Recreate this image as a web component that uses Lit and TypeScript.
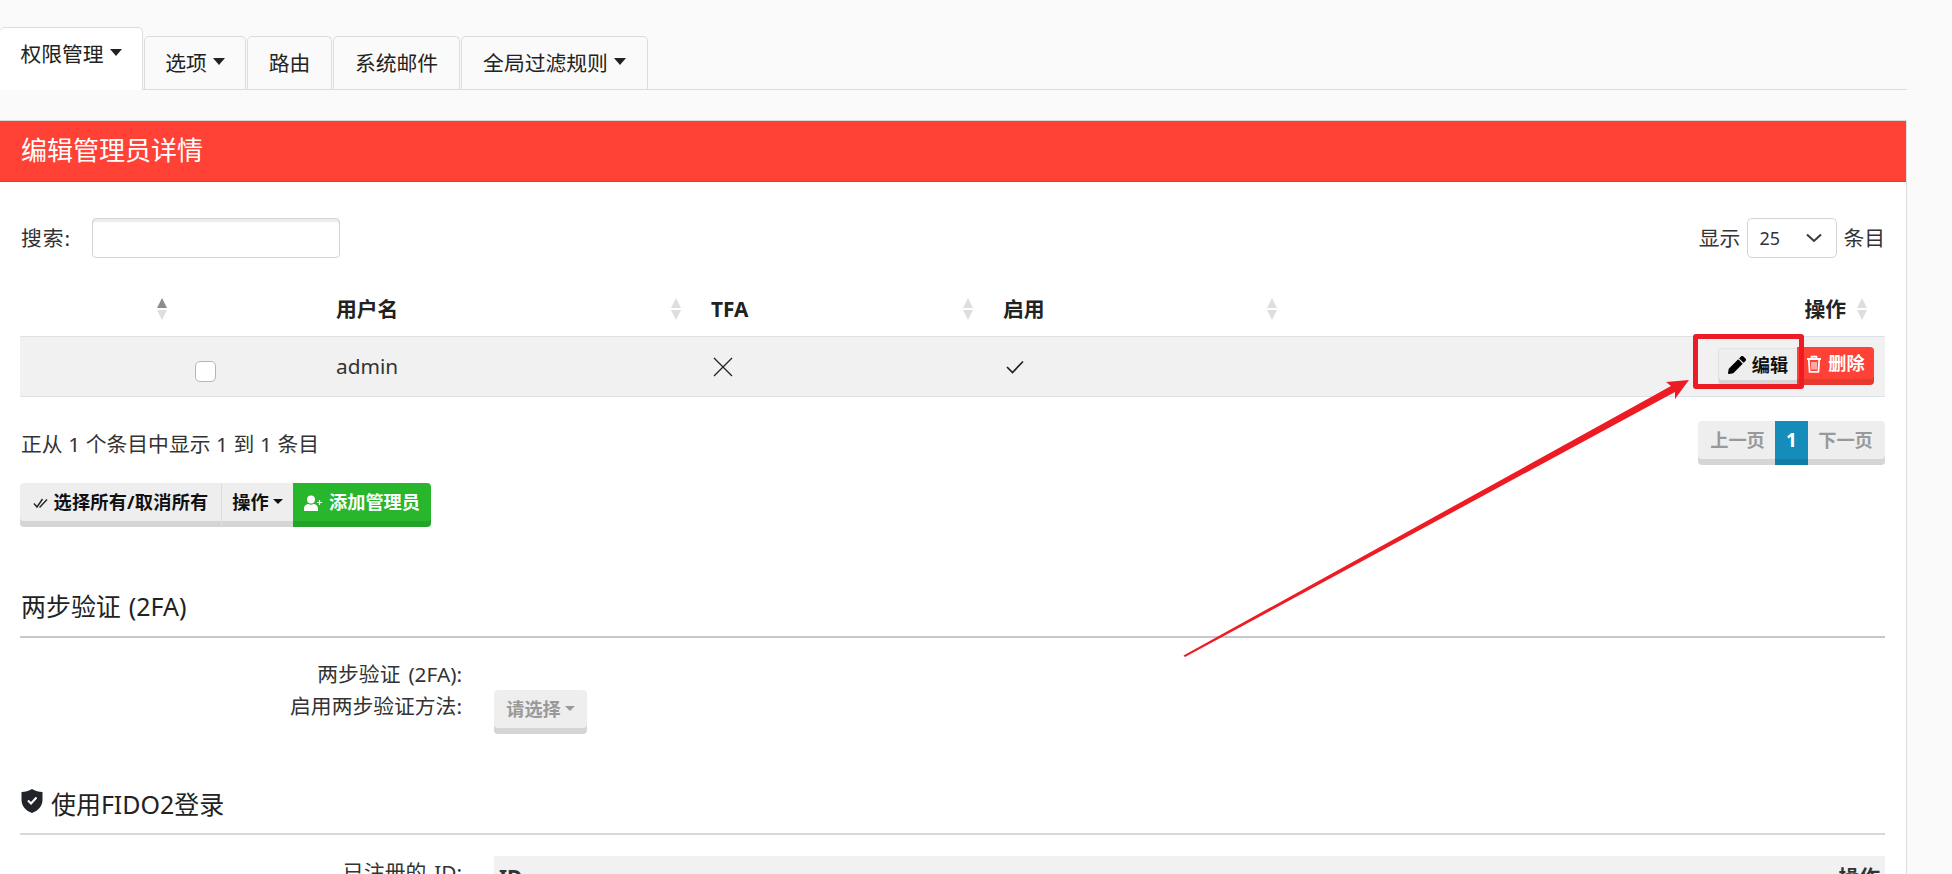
import { LitElement, html, css, svg } from "lit";
import { customElement } from "lit/decorators.js";

const sort = (active = false) => html`<svg class="sort" width="14" height="24" viewBox="0 0 14 24">
  <path d="M7 1 L12 11 H2 Z" fill=${active ? "#8c8c8c" : "#dedede"}></path>
  <path d="M7 23 L12 13 H2 Z" fill="#dedede"></path>
</svg>`;

const caret = html`<span class="caret"></span>`;

const pencil = html`<svg class="ic" width="18" height="18" viewBox="0 0 512 512" fill="#000"><path d="M497.9 142.1l-46.1 46.1c-4.7 4.7-12.3 4.7-17 0l-111-111c-4.7-4.7-4.7-12.3 0-17l46.1-46.1c18.7-18.7 49.1-18.7 67.9 0l60.1 60.1c18.8 18.7 18.8 49.1 0 67.9zM284.2 99.8L21.6 362.4.4 483.9c-2.9 16.4 11.4 30.6 27.8 27.8l121.5-21.3 262.6-262.6c4.7-4.7 4.7-12.3 0-17l-111-111c-4.8-4.7-12.4-4.7-17.1 0z"></path></svg>`;

const trash = html`<svg class="ic" width="16" height="18" viewBox="0 0 16 18" fill="none" stroke="#fff"><path d="M1 4 H15" stroke-width="2"></path><path d="M5.5 3.5 V1.6 H10.5 V3.5" stroke-width="1.6"></path><path d="M2.8 4.5 L3.6 16.8 H12.4 L13.2 4.5" stroke-width="1.8"></path><path d="M6 7 V14.5 M8 7 V14.5 M10 7 V14.5" stroke-width="1.1"></path></svg>`;

const userPlus = html`<svg class="ic" width="19" height="16" viewBox="0 0 19 16" fill="#fff"><circle cx="7" cy="4.4" r="4"></circle><path d="M0 16 V13.5 C0 10.5 2.5 9 4.5 9 C6 10 8 10 9.5 9 C11.5 9 14 10.5 14 13.5 V16 Z"></path><path d="M15.5 5 V10 M13 7.5 H18" stroke="#fff" stroke-width="1.2"></path></svg>`;

const doubleCheck = html`<svg class="ic" width="15" height="12" viewBox="0 0 15 12" fill="none" stroke="#222" stroke-width="1.4"><path d="M1 6.5 L4 10 L9.5 2"></path><path d="M6.5 9.5 L7 10 L14 2.5"></path></svg>`;

const shield = html`<svg class="shield" width="22" height="24" viewBox="0 0 22 24"><path d="M11 0 C14 2 18 3 21.5 3 V11 C21.5 17 17 21.8 11 24 C5 21.8 .5 17 .5 11 V3 C4 3 8 2 11 0 Z" fill="#212529"></path><path d="M7 11.5 L10 14.5 L15.5 8.5" fill="none" stroke="#fff" stroke-width="2"></path></svg>`;

const arrow = svg`<polygon points="1183.5,655.5 1671,386 1666,382 1689,380 1675,399 1675,392 1185,657" fill="#ed1c24"></polygon>`;

@customElement("app-root")
export class AppRoot extends LitElement {
  static styles = css`
    :host {
      display: block;
      position: relative;
      height: 874px;
      overflow: hidden;
      background: #fafafa;
      color: #333;
      font: 20.8px/32px "Noto Sans", "Noto Sans CJK SC", sans-serif;
    }
    * { box-sizing: border-box; }
    .tabs {
      display: flex;
      align-items: flex-end;
      width: 1907px;
      height: 90px;
      padding-top: 27px;
      border-bottom: 1px solid #ddd;
      color: #222;
    }
    .tab {
      height: 53px;
      margin-right: 1px;
      display: flex;
      align-items: center;
      justify-content: center;
      border: 1px solid #ddd;
      border-bottom: 0;
      border-radius: 5px 5px 0 0;
      background: #fafafa;
    }
    .tab.active {
      height: 63px;
      margin-bottom: -1px;
      padding-bottom: 10px;
      background: #fff;
      border-left: 0;
    }
    .caret {
      display: inline-block;
      width: 0;
      height: 0;
      margin-left: 6px;
      margin-bottom: 3px;
      border-top: 7px solid currentColor;
      border-left: 6px solid transparent;
      border-right: 6px solid transparent;
    }
    .panel {
      width: 1907px;
      height: 754px;
      margin-top: 30px;
      background: #fff;
      border-right: 1px solid #ddd;
    }
    .title {
      height: 62px;
      padding-left: 21px;
      font-size: 26px;
      line-height: 59px;
      color: #fff;
      background: #ff4136;
      border-top: 1px solid #d8d8d8;
      border-bottom: 1px solid #e23b30;
    }
    .body { padding: 36px 21px 0 20px; }
    .toolbar {
      display: flex;
      align-items: center;
      justify-content: space-between;
      height: 40px;
    }
    .side { display: flex; align-items: center; }
    .search-label { margin-left: 1px; margin-right: 21px; letter-spacing: 0.9px; }
    .search {
      width: 248px;
      height: 40px;
      border: 1px solid #ced4da;
      border-radius: 4px;
      background: #fff;
      box-shadow: inset 0 3px 0 #ececec;
      outline: none;
    }
    .select {
      width: 90px;
      height: 40px;
      margin: 0 6px 0 7px;
      padding: 0 14px 0 11px;
      display: flex;
      align-items: center;
      justify-content: space-between;
      border: 1px solid #ced4da;
      border-radius: 5px;
      font-size: 18px;
      background: #fff;
    }
    .thead, .row {
      display: grid;
      grid-template-columns: 300px 375px 292px 300px 598px;
    }
    .thead { height: 78px; font-weight: 700; color: #222; }
    .th {
      display: flex;
      align-items: center;
      justify-content: space-between;
      padding: 24px 12px 0 16px;
      height: 78px;
    }
    .th.first { justify-content: flex-end; padding-right: 151px; }
    .th.wide { padding-right: 8px; }
    .th.last { justify-content: flex-end; padding-right: 16px; gap: 9px; }
    .sort { display: block; }
    .row {
      height: 61px;
      background: #f1f1f1;
      border-top: 1px solid #dee2e6;
      border-bottom: 1px solid #dee2e6;
    }
    .td { padding: 0 16px; display: flex; align-items: center; }
    .td.name { padding-bottom: 2px; }
    .check {
      appearance: none;
      width: 21px;
      height: 21px;
      margin: 10px 0 0 159px;
      flex: none;
      background: #fff;
      border: 1px solid #b5b5b5;
      border-radius: 5px;
    }
    .actions { justify-content: flex-end; padding: 0 11px 0 0; align-items: flex-start; }
    .btn {
      display: inline-flex;
      align-items: center;
      justify-content: center;
      gap: 6px;
      font-weight: 700;
      font-size: 18.2px;
      line-height: 1;
      padding-bottom: 5px;
      background: #eee;
      color: #111;
      box-shadow: inset 0 -6px 0 rgba(0, 0, 0, 0.1);
    }
    .btn.rnd-l { border-radius: 4px 0 0 4px; }
    .btn.rnd-r { border-radius: 0 4px 4px 0; }
    .edit {
      width: 79px;
      height: 38px;
      margin-top: 11px;
      border-radius: 4px 0 0 4px;
      border-top: 1px solid #e2e2e2;
      border-left: 1px solid #e2e2e2;
    }
    .del { width: 77px; height: 38px; margin-top: 10px; background: #ff4136; color: #fff; }
    .below {
      display: flex;
      align-items: center;
      justify-content: space-between;
      height: 44px;
      margin-top: 24px;
    }
    .info { padding-top: 2px; padding-left: 1px; word-spacing: 0.2px; }
    .pager { display: flex; height: 44px; }
    .pager .btn { color: #999; height: 44px; }
    .prev { width: 77px; padding-left: 2px; }
    .cur { width: 33px; color: #fff !important; background: #158cba; font-size: 19px; }
    .next { width: 77px; padding-right: 2px; }
    .group { display: flex; height: 44px; margin-top: 18px; }
    .group .btn { height: 44px; }
    .g1 { width: 202px; border-right: 1px solid #ddd; letter-spacing: 0.2px; }
    .g2 { width: 71px; gap: 4px; }
    .g2 .caret { margin-left: 0; border-top-width: 5px; border-left-width: 5px; border-right-width: 5px; }
    .g3 { width: 138px; background: #28b62c; color: #fff; }
    .section {
      margin: 62px 0 0;
      font-size: 24.96px;
      font-weight: 400;
      line-height: 34px;
      padding-bottom: 13px;
      padding-left: 1px;
      border-bottom: 2px solid #c8c8c8;
      display: flex;
      align-items: center;
      gap: 8px;
      color: #222;
      word-spacing: 1.5px;
    }
    .form { display: grid; grid-template-columns: 442px 1fr; column-gap: 32px; }
    .label { text-align: right; word-spacing: 2.5px; }
    .f1 { margin-top: 20px; }
    .disabled { width: 93px; height: 44px; color: #999; gap: 4px; border-radius: 4px; }
    .disabled .caret { margin-left: 0; border-top-width: 5px; border-left-width: 5px; border-right-width: 5px; }
    .section.second { margin-top: 53px; padding-bottom: 12px; border-bottom-color: #d8d8d8; }
    .shield { margin-bottom: 6px; }
    .f2 { margin-top: 21px; }
    .ids {
      height: 60px;
      padding: 5px 5px 0;
      display: flex;
      justify-content: space-between;
      background: #f1f1f1;
      font-weight: 700;
    }
    .overlay { position: absolute; left: 0; top: 0; pointer-events: none; }
    .box {
      position: absolute;
      left: 1693px;
      top: 334px;
      width: 111px;
      height: 55px;
      border: 5px solid #ed1c24;
      border-radius: 3px;
      pointer-events: none;
    }
  `;

  render() {
    return html`
      <nav class="tabs">
        <div class="tab active" style="width:143px">权限管理${caret}</div>
        <div class="tab" style="width:102px">选项${caret}</div>
        <div class="tab" style="width:85px">路由</div>
        <div class="tab" style="width:127px">系统邮件</div>
        <div class="tab" style="width:187px">全局过滤规则${caret}</div>
      </nav>
      <main class="panel">
        <div class="title">编辑管理员详情</div>
        <div class="body">
          <div class="toolbar">
            <div class="side"><span class="search-label">搜索:</span><input class="search" /></div>
            <div class="side">显示
              <div class="select"><span>25</span>
                <svg width="16" height="10" viewBox="0 0 16 10" fill="none" stroke="#343a40" stroke-width="2"><path d="M1 1.5 L8 8 L15 1.5"></path></svg>
              </div>
              <span>条目</span>
            </div>
          </div>
          <div class="thead">
            <div class="th first">${sort(true)}</div>
            <div class="th"><span>用户名</span>${sort()}</div>
            <div class="th"><span>TFA</span>${sort()}</div>
            <div class="th wide"><span>启用</span>${sort()}</div>
            <div class="th last"><span>操作</span>${sort()}</div>
          </div>
          <div class="row">
            <div class="td"><input class="check" type="checkbox" /></div>
            <div class="td name">admin</div>
            <div class="td">
              <svg width="20" height="20" viewBox="0 0 20 20" fill="none" stroke="#222" stroke-width="1.3" style="margin-left:2px"><path d="M1 1 L19 19 M19 1 L1 19"></path></svg>
            </div>
            <div class="td">
              <svg width="18" height="14" viewBox="0 0 18 14" fill="none" stroke="#222" stroke-width="1.7" style="margin-left:3px"><path d="M1 7 L6.5 12.5 L17 1.5"></path></svg>
            </div>
            <div class="td actions">
              <div class="btn edit">${pencil}编辑</div>
              <div class="btn del rnd-r">${trash}删除</div>
            </div>
          </div>
          <div class="below">
            <span class="info">正从 1 个条目中显示 1 到 1 条目</span>
            <div class="pager">
              <div class="btn prev rnd-l">上一页</div>
              <div class="btn cur">1</div>
              <div class="btn next rnd-r">下一页</div>
            </div>
          </div>
          <div class="group">
            <div class="btn g1 rnd-l">${doubleCheck}选择所有/取消所有</div>
            <div class="btn g2">操作${caret}</div>
            <div class="btn g3 rnd-r">${userPlus}添加管理员</div>
          </div>
          <h3 class="section">两步验证 (2FA)</h3>
          <div class="form f1">
            <div class="label">两步验证 (2FA):</div>
            <div></div>
            <div class="label">启用两步验证方法:</div>
            <div><div class="btn disabled">请选择${caret}</div></div>
          </div>
          <h3 class="section second">${shield}<span>使用FIDO2登录</span></h3>
          <div class="form f2">
            <div class="label">已注册的 ID:</div>
            <div class="ids"><span>ID</span><span>操作</span></div>
          </div>
        </div>
      </main>
      <div class="box"></div>
      <svg class="overlay" width="1952" height="874" viewBox="0 0 1952 874">${arrow}</svg>
    `;
  }
}
